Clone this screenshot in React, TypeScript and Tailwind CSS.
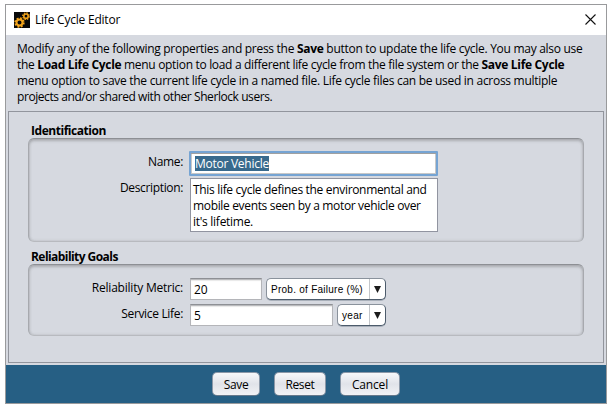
import type { ReactNode } from "react";

const insetField =
  "h-[22px] border border-[#b4b5b9] border-t-[#8e9095] bg-white pt-px pl-[3px] text-[12px] leading-[20px] shadow-[inset_0_1px_0_#b9babd,inset_0_2px_1px_#e8e8e8]";

function Group({
  title,
  titleClass,
  className,
  children,
}: {
  title: string;
  titleClass: string;
  className: string;
  children: ReactNode;
}) {
  return (
    <section>
      <h2 className={`ml-[3px] h-[15px] text-[12px] leading-[15px] font-bold ${titleClass}`}>{title}</h2>
      <div
        className={`w-[556px] rounded-[6px] border border-[#a7a9ae] border-t-[#8d8f94] border-b-[#b8babf] shadow-[inset_0_2px_3px_rgba(80,80,80,0.28),inset_0_0_3px_rgba(80,80,80,0.22)] ${className}`}
      >
        {children}
      </div>
    </section>
  );
}

function Row({ label, className, children }: { label: string; className: string; children: ReactNode }) {
  return (
    <div className="flex items-start">
      <label className={`mr-[7px] w-[154px] text-right whitespace-nowrap ${className}`}>{label}</label>
      {children}
    </div>
  );
}

function Combo({ text, className }: { text: string; className: string }) {
  return (
    <div
      className={`flex h-[22px] overflow-hidden rounded-[5px] border border-[#8a929c] border-r-[#4c5b6b] border-b-[#4c5b6b] bg-white font-['Liberation_Sans',sans-serif] text-[10px] leading-[21px] shadow-[0_1px_0_#a9b0ba] ${className}`}
    >
      <span className="flex-1 pl-[4px] whitespace-nowrap">{text}</span>
      <span className="flex w-[16px] items-center justify-center border-l border-[#c3c6ca]">
        <svg width="7" height="7" viewBox="0 0 7 7" className="fill-[#1c1c1c]">
          <path d="M0 0h7L3.5 7z" />
        </svg>
      </span>
    </div>
  );
}

function PushButton({ text, className }: { text: string; className: string }) {
  return (
    <button
      className={`h-[24px] rounded-[5px] border border-[#8b98a8] border-b-[#66788b] bg-linear-to-b from-[#f7f8fa] via-[#e1e3e9] to-[#f1f2f5] pt-px text-[12px] leading-[22px] ${className}`}
    >
      {text}
    </button>
  );
}

function GearIcon() {
  return (
    <svg width="16" height="16" viewBox="0 0 16 16" fill="none" stroke="#f2a41c">
      <rect width="16" height="16" fill="#080808" stroke="none" />
      <circle cx="5.5" cy="10.5" r="3" strokeWidth="2" />
      <circle cx="5.5" cy="10.5" r="4.4" strokeWidth="1.6" strokeDasharray="1.9 1.556" />
      <circle cx="12" cy="4.2" r="2.2" strokeWidth="1.6" />
      <circle cx="12" cy="4.2" r="3.3" strokeWidth="1.2" strokeDasharray="1.4 1.192" />
    </svg>
  );
}

export default function App() {
  return (
    <div className="h-[408px] w-[613px] overflow-hidden bg-white pt-[4px] pl-[5px] font-['Open_Sans','Noto_Sans',sans-serif] text-[12px] leading-[16px] text-black">
      <div className="flex h-[400px] w-[602px] flex-col border border-[#999a9c] bg-[#d6d9e0]">
        <header className="flex h-[30px] items-center bg-white pr-[10px] pl-[8px]">
          <GearIcon />
          <h1 className="ml-[5px] text-[12px] tracking-[-0.22px]">Life Cycle Editor</h1>
          <svg className="mb-px ml-auto" width="11" height="11" viewBox="0 0 11 11" fill="none" stroke="#111" strokeWidth="1.1">
            <path d="M.5.5l10 10M10.5.5l-10 10" />
          </svg>
        </header>
        <div className="h-[76px] pt-[6px] pl-[11px] whitespace-nowrap">
          <p className="tracking-[-0.29px]">
            Modify any of the following properties and press the <b>Save</b> button to update the life cycle. You may also use
          </p>
          <p className="tracking-[-0.32px]">
            the <b>Load Life Cycle</b> menu option to load a different life cycle from the file system or the <b>Save Life Cycle</b>
          </p>
          <p className="tracking-[-0.29px]">
            menu option to save the current life cycle in a named file. Life cycle files can be used in across multiple
          </p>
          <p className="tracking-[-0.43px]">projects and/or shared with other Sherlock users.</p>
        </div>
        <main className="ml-[2px] h-[252px] w-[596px] border border-[#92959d] pt-[11px] pl-[19px]">
          <Group title="Identification" titleClass="tracking-[-0.46px]" className="h-[104px] pt-[12px]">
            <Row label="Name:" className="pt-[3px] tracking-[-0.35px]">
              <div className="-ml-px h-[25px] w-[249px] rounded-[1px] border-2 border-[#76a4d3] bg-white pt-[1px] pl-[4px] shadow-[inset_0_1px_0_#a0a0a0,inset_0_0_0_1px_#c8c8c8]">
                <span className="mt-[2px] inline-block h-[15px] bg-[#396a8d] leading-[16px] tracking-[-0.26px] text-white">
                  Motor Vehicle
                </span>
              </div>
            </Row>
            <div className="h-[2px]" />
            <Row label="Description:" className="pt-[2px] tracking-[-0.35px]">
              <div className="h-[54px] w-[248px] border border-[#9194a0] bg-white pt-[3px] pl-[2px] whitespace-nowrap">
                <p className="tracking-[-0.32px]">This life cycle defines the environmental and</p>
                <p className="tracking-[-0.34px]">mobile events seen by a motor vehicle over</p>
                <p className="tracking-[-0.28px]">it&apos;s lifetime.</p>
              </div>
            </Row>
          </Group>
          <div className="h-[7px]" />
          <Group title="Reliability Goals" titleClass="tracking-[-0.56px]" className="h-[72px] pt-[13px]">
            <Row label="Reliability Metric:" className="pt-[2px] tracking-[-0.22px]">
              <div className={`${insetField} w-[72px]`}>20</div>
              <Combo text="Prob. of Failure (%)" className="ml-[4px] w-[120px] tracking-[0.26px]" />
            </Row>
            <div className="h-[4px]" />
            <Row label="Service Life:" className="pt-[2px] tracking-[-0.33px]">
              <div className={`${insetField} w-[143px]`}>5</div>
              <Combo text="year" className="ml-[4px] w-[49px] tracking-[0.3px]" />
            </Row>
          </Group>
        </main>
        <div className="h-[2px]" />
        <footer className="flex h-[38px] bg-[#265f84] pt-[7px] pl-[206px]">
          <PushButton text="Save" className="w-[48px] tracking-[-0.35px]" />
          <PushButton text="Reset" className="ml-[14px] w-[52px] tracking-[-0.35px]" />
          <PushButton text="Cancel" className="ml-[14px] w-[60px] tracking-[-0.15px]" />
        </footer>
      </div>
    </div>
  );
}
